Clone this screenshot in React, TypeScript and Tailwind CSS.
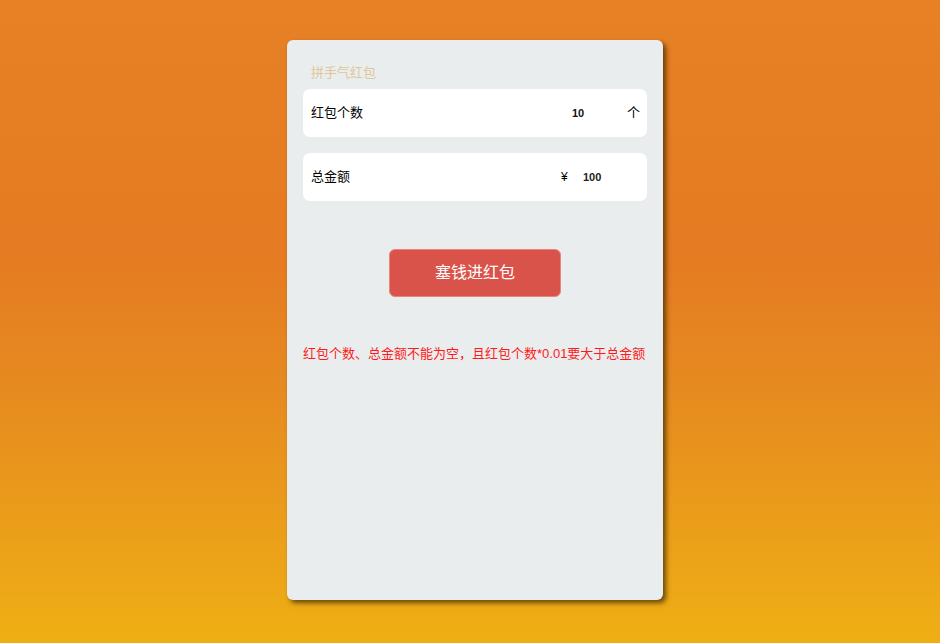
import React from "react";

export default function App() {
  return (
    <div
      className="w-[940px] h-[643px] flex justify-center pl-[10px] pt-[40px] bg-[linear-gradient(to_bottom,#e68125_0%,#e57b22_40%,#e68a20_60%,#efaf14_100%)]"
      style={{ fontFamily: '"Liberation Sans", "Noto Sans CJK SC", sans-serif' }}
    >
      <div className="w-[376px] h-[560px] bg-[#e9edee] rounded-[6px] shadow-[3px_3px_5px_rgba(60,40,0,0.75)] px-[16px] pt-[24px] flex flex-col">
        <div className="text-[13px] leading-[18px] text-[#e2c796] pl-[8px]">拼手气红包</div>
        <div className="mt-[7px] h-[48px] bg-white rounded-[7px] flex items-center pl-[8px]">
          <span className="text-[13px] text-black flex-1">红包个数</span>
          <span className="text-[11px] font-bold text-[#111] w-[55px]">10</span>
          <span className="text-[13px] text-black mr-[7px]">个</span>
        </div>
        <div className="mt-[16px] h-[48px] bg-white rounded-[7px] flex items-center pl-[8px]">
          <span className="text-[13px] text-black flex-1">总金额</span>
          <span className="text-[12px] text-black w-[22px]">¥</span>
          <span className="text-[11px] font-bold text-[#222] w-[64px]">100</span>
        </div>
        <div className="mt-[48px] flex justify-center">
          <button className="w-[172px] h-[48px] bg-[#d9534a] rounded-[6px] text-white text-[16px] border border-[#e8847c]">
            塞钱进红包
          </button>
        </div>
        <div className="mt-[48px] text-[13px] leading-[17px] text-[#ff1a1a] whitespace-nowrap">
          红包个数、总金额不能为空，且红包个数*0.01要大于总金额
        </div>
      </div>
    </div>
  );
}
